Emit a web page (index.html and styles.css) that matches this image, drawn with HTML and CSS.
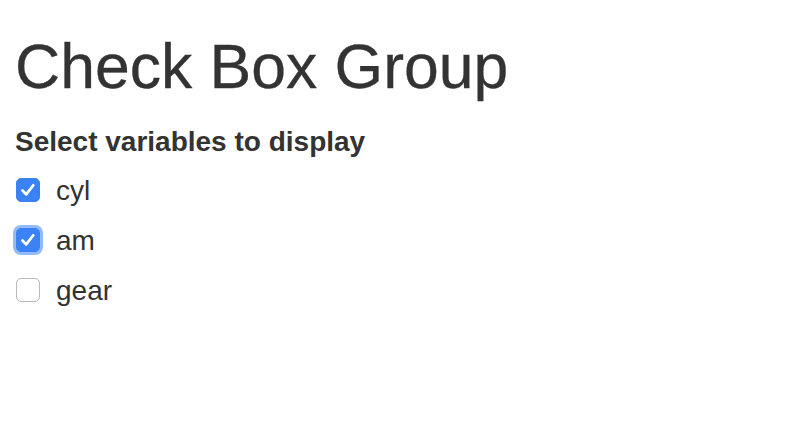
FILE: index.html
```html
<!DOCTYPE html>
<html>
<head>
<meta charset="utf-8">
<link rel="stylesheet" href="styles.css">
</head>
<body>
<div class="page">
  <h1 class="title">Check Box Group</h1>
  <div class="group">
    <div class="group-label">Select variables to display</div>
    <div class="option">
      <span class="box checked"><svg viewBox="0 0 24 24" width="24" height="24"><path d="M6 12.5 L10 16.8 L17.8 6.8" fill="none" stroke="#fff" stroke-width="3" stroke-linecap="round" stroke-linejoin="round"/></svg></span>
      <span class="text">cyl</span>
    </div>
    <div class="option">
      <span class="box checked focus"><svg viewBox="0 0 24 24" width="24" height="24"><path d="M6 12.5 L10 16.8 L17.8 6.8" fill="none" stroke="#fff" stroke-width="3" stroke-linecap="round" stroke-linejoin="round"/></svg></span>
      <span class="text">am</span>
    </div>
    <div class="option">
      <span class="box"></span>
      <span class="text">gear</span>
    </div>
  </div>
</div>
</body>
</html>
```
FILE: styles.css
```css
html, body {
  margin: 0;
  padding: 0;
  background: #fff;
}
body {
  font-family: "Liberation Sans", Arial, Helvetica, sans-serif;
  color: #333;
}
.page {
  padding: 32px 15px 0 15px;
}
.title {
  margin: 0;
  font-size: 62.5px;
  line-height: 68px;
  font-weight: 400;
  -webkit-text-stroke: 0.3px #333;
}
.group {
  margin-top: 22px;
}
.group-label {
  font-size: 28px;
  font-weight: 700;
  line-height: 40px;
  margin-bottom: 3px;
}
.option {
  display: flex;
  align-items: center;
  height: 50px;
  font-size: 28px;
  line-height: 50px;
}
.text {
  position: relative;
  top: 1px;
}
.box {
  width: 24px;
  height: 24px;
  box-sizing: border-box;
  border-radius: 5px;
  border: 1px solid #b9b9b9;
  background: #fff;
  margin-left: 1px;
  margin-right: 16px;
  display: flex;
  align-items: center;
  justify-content: center;
  flex: none;
}
.box svg {
  display: block;
}
.box.checked {
  background: #3b82f6;
  border-color: #3b82f6;
}
.box.focus {
  box-shadow: 0 0 0 3px rgba(59, 130, 246, 0.55);
}
```
